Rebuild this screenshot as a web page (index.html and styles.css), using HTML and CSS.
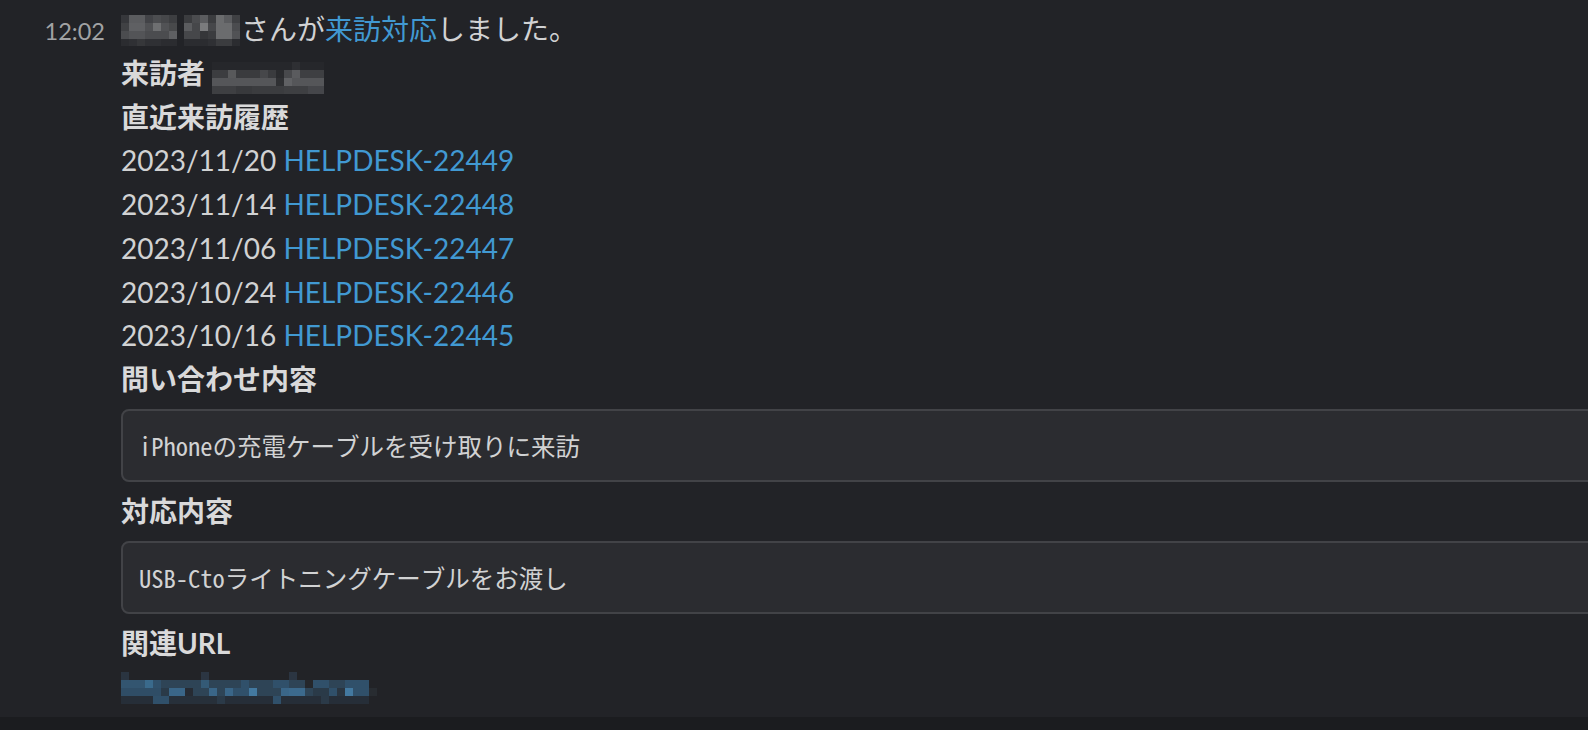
FILE: index.html
```html
<!DOCTYPE html>
<html lang="ja">
<head>
<meta charset="utf-8">
<title>来訪対応</title>
<link rel="stylesheet" href="styles.css">
</head>
<body>
<div class="msg">
  <div class="gutter"><span class="time">12:02</span></div>
  <div class="content">
    <div class="line"><svg class="mosaic mosaic-name" width="120" height="31" viewBox="0 0 120 31" shape-rendering="crispEdges">
        <rect x="0" y="0" width="8" height="8" fill="#36373b"/><rect x="8" y="0" width="16" height="8" fill="#5b5c5f"/><rect x="24" y="0" width="8" height="8" fill="#424347"/><rect x="32" y="0" width="8" height="8" fill="#4c4d50"/><rect x="40" y="0" width="8" height="8" fill="#46474a"/><rect x="48" y="0" width="8" height="8" fill="#3d3e41"/>
        <rect x="0" y="8" width="8" height="8" fill="#404144"/><rect x="8" y="8" width="16" height="8" fill="#5f6063"/><rect x="24" y="8" width="8" height="8" fill="#505154"/><rect x="32" y="8" width="8" height="8" fill="#6e6f71"/><rect x="40" y="8" width="8" height="8" fill="#515255"/><rect x="48" y="8" width="8" height="8" fill="#48494b"/>
        <rect x="0" y="16" width="8" height="8" fill="#4b4c4f"/><rect x="8" y="16" width="16" height="8" fill="#535457"/><rect x="24" y="16" width="24" height="8" fill="#4b4c4f"/><rect x="48" y="16" width="8" height="8" fill="#5e5f62"/>
        <rect x="0" y="24" width="8" height="7" fill="#2b2c30"/><rect x="8" y="24" width="8" height="7" fill="#2f3034"/><rect x="16" y="24" width="8" height="7" fill="#36373a"/><rect x="24" y="24" width="16" height="7" fill="#2f3034"/><rect x="40" y="24" width="16" height="7" fill="#2b2c30"/>
        <rect x="63" y="0" width="8" height="8" fill="#3b3c3f"/><rect x="71" y="0" width="8" height="8" fill="#4b4c4f"/><rect x="79" y="0" width="8" height="8" fill="#5b5c5f"/><rect x="87" y="0" width="8" height="8" fill="#3b3c3f"/><rect x="95" y="0" width="8" height="8" fill="#6b6c6e"/><rect x="103" y="0" width="8" height="8" fill="#5b5c5f"/><rect x="111" y="0" width="8" height="8" fill="#3f4043"/>
        <rect x="63" y="8" width="8" height="8" fill="#5b5c5f"/><rect x="71" y="8" width="8" height="8" fill="#46474a"/><rect x="79" y="8" width="8" height="8" fill="#7a7b7d"/><rect x="87" y="8" width="8" height="8" fill="#46474a"/><rect x="95" y="8" width="16" height="8" fill="#6b6c6e"/><rect x="111" y="8" width="8" height="8" fill="#4b4c4f"/>
        <rect x="63" y="16" width="16" height="8" fill="#46474a"/><rect x="79" y="16" width="8" height="8" fill="#353639"/><rect x="87" y="16" width="8" height="8" fill="#3b3c3f"/><rect x="95" y="16" width="16" height="8" fill="#6b6c6e"/><rect x="111" y="16" width="8" height="8" fill="#515255"/>
        <rect x="63" y="24" width="24" height="7" fill="#2b2c30"/><rect x="87" y="24" width="8" height="7" fill="#2f3034"/><rect x="95" y="24" width="16" height="7" fill="#3b3c3f"/><rect x="111" y="24" width="8" height="7" fill="#2b2c30"/>
      </svg>さんが<a class="link" href="#">来訪対応</a>しました。</div>
    <div class="line"><b class="label">来訪者</b> <svg class="mosaic mosaic-user" width="112" height="32" viewBox="0 0 112 32" shape-rendering="crispEdges">
        <rect x="0" y="0" width="112" height="8" fill="#26272b"/><rect x="80" y="0" width="8" height="8" fill="#2e2f33"/>
        <rect x="0" y="8" width="16" height="8" fill="#3c3d40"/><rect x="16" y="8" width="8" height="8" fill="#58595b"/><rect x="24" y="8" width="24" height="8" fill="#3a3b3e"/><rect x="48" y="8" width="8" height="8" fill="#46474a"/><rect x="56" y="8" width="8" height="8" fill="#3a3b3e"/><rect x="64" y="8" width="8" height="8" fill="#2a2b2e"/><rect x="72" y="8" width="8" height="8" fill="#48494c"/><rect x="80" y="8" width="8" height="8" fill="#5a5b5e"/><rect x="88" y="8" width="24" height="8" fill="#3e3f42"/>
        <rect x="0" y="16" width="64" height="8" fill="#555659"/><rect x="64" y="16" width="8" height="8" fill="#2f3033"/><rect x="72" y="16" width="8" height="8" fill="#606164"/><rect x="80" y="16" width="32" height="8" fill="#555659"/>
        <rect x="0" y="24" width="24" height="8" fill="#3e3f42"/><rect x="24" y="24" width="16" height="8" fill="#38393c"/><rect x="40" y="24" width="32" height="8" fill="#3b3c3f"/><rect x="72" y="24" width="24" height="8" fill="#3e3f42"/><rect x="96" y="24" width="16" height="8" fill="#45464a"/>
      </svg></div>
    <div class="line"><b class="label">直近来訪履歴</b></div>
    <div class="line">2023/11/20 <a class="link" href="#">HELPDESK-22449</a></div>
    <div class="line">2023/11/14 <a class="link" href="#">HELPDESK-22448</a></div>
    <div class="line">2023/11/06 <a class="link" href="#">HELPDESK-22447</a></div>
    <div class="line">2023/10/24 <a class="link" href="#">HELPDESK-22446</a></div>
    <div class="line">2023/10/16 <a class="link" href="#">HELPDESK-22445</a></div>
    <div class="line"><b class="label">問い合わせ内容</b></div>
    <pre class="code">iPhoneの充電ケーブルを受け取りに来訪</pre>
    <div class="line"><b class="label">対応内容</b></div>
    <pre class="code">USB-Ctoライトニングケーブルをお渡し</pre>
    <div class="line"><b class="label">関連URL</b></div>
    <div class="line"><svg class="mosaic mosaic-url" width="258" height="32" viewBox="0 0 258 32" shape-rendering="crispEdges">
        <rect x="0" y="0" width="8" height="8" fill="#2a3440"/><rect x="80" y="0" width="8" height="8" fill="#2b3542"/><rect x="168" y="0" width="8" height="8" fill="#2b3542"/>
        <rect x="0" y="8" width="24" height="8" fill="#335570"/><rect x="24" y="8" width="8" height="8" fill="#3a6a8c"/><rect x="32" y="8" width="8" height="8" fill="#30506a"/><rect x="40" y="8" width="40" height="8" fill="#2e4456"/><rect x="80" y="8" width="8" height="8" fill="#345a76"/><rect x="88" y="8" width="32" height="8" fill="#2e4456"/><rect x="120" y="8" width="8" height="8" fill="#30506a"/><rect x="128" y="8" width="24" height="8" fill="#2e4456"/><rect x="152" y="8" width="16" height="8" fill="#30506a"/><rect x="168" y="8" width="16" height="8" fill="#2e4456"/><rect x="184" y="8" width="8" height="8" fill="#25272b"/><rect x="192" y="8" width="16" height="8" fill="#30506a"/><rect x="208" y="8" width="16" height="8" fill="#2e4456"/><rect x="224" y="8" width="24" height="8" fill="#30506a"/>
        <rect x="0" y="16" width="40" height="8" fill="#2f4d66"/><rect x="40" y="16" width="8" height="8" fill="#2a3a48"/><rect x="48" y="16" width="16" height="8" fill="#3a6688"/><rect x="64" y="16" width="8" height="8" fill="#262b33"/><rect x="72" y="16" width="16" height="8" fill="#2e4456"/><rect x="88" y="16" width="8" height="8" fill="#3a6688"/><rect x="96" y="16" width="8" height="8" fill="#2e4456"/><rect x="104" y="16" width="8" height="8" fill="#3a6688"/><rect x="112" y="16" width="16" height="8" fill="#30506a"/><rect x="128" y="16" width="8" height="8" fill="#4379a0"/><rect x="136" y="16" width="24" height="8" fill="#2e4456"/><rect x="160" y="16" width="8" height="8" fill="#3a6688"/><rect x="168" y="16" width="16" height="8" fill="#3c6a8d"/><rect x="184" y="16" width="8" height="8" fill="#2e4456"/><rect x="192" y="16" width="16" height="8" fill="#2a3a48"/><rect x="208" y="16" width="8" height="8" fill="#30506a"/><rect x="216" y="16" width="8" height="8" fill="#2a3540"/><rect x="224" y="16" width="8" height="8" fill="#4379a0"/><rect x="232" y="16" width="16" height="8" fill="#30506a"/><rect x="248" y="16" width="8" height="8" fill="#282c31"/>
        <rect x="0" y="24" width="32" height="8" fill="#262e38"/><rect x="32" y="24" width="16" height="8" fill="#30506a"/><rect x="48" y="24" width="48" height="8" fill="#27303a"/><rect x="96" y="24" width="8" height="8" fill="#2b3a48"/><rect x="104" y="24" width="48" height="8" fill="#262e38"/><rect x="152" y="24" width="8" height="8" fill="#30506a"/><rect x="160" y="24" width="40" height="8" fill="#262e38"/><rect x="200" y="24" width="8" height="8" fill="#2b3a48"/><rect x="208" y="24" width="40" height="8" fill="#262e38"/>
      </svg></div>
  </div>
</div>
</body>
</html>
```

FILE: styles.css
```css
html, body {
  margin: 0;
  padding: 0;
}

body {
  background: #1b1c1f;
  height: 730px;
  overflow: hidden;
  font-family: Lato, "Noto Sans CJK JP", sans-serif;
  color: #d1d2d3;
}

.msg {
  display: flex;
  align-items: baseline;
  background: #222327;
  padding: 8px 0 8px;
}

.gutter {
  flex: 0 0 121px;
  box-sizing: border-box;
  padding-right: 16px;
  text-align: right;
}

.time {
  font-size: 23.5px;
  line-height: 43.75px;
  color: #a1a2a4;
}

.content {
  flex: 1 1 auto;
  min-width: 0;
  font-size: 28px;
  line-height: 43.75px;
}

.line {
  white-space: nowrap;
}

.label {
  font-weight: 700;
  color: #d9d9da;
}

.link {
  color: #4199d2;
  text-decoration: none;
}

.mosaic {
  display: inline-block;
}

.mosaic-name {
  vertical-align: -6px;
}

.mosaic-user {
  vertical-align: -10px;
}

.mosaic-url {
  vertical-align: -7px;
}

.code {
  margin: 7px -80px 8px 0;
  padding: 17px 16px;
  background: #2b2c30;
  border: 2px solid #424347;
  border-radius: 8px;
  font-family: "Noto Sans Mono CJK JP", "DejaVu Sans Mono", "Noto Sans CJK JP", monospace;
  font-size: 24.5px;
  line-height: 35px;
  color: #d1d2d3;
  white-space: pre;
}
```
